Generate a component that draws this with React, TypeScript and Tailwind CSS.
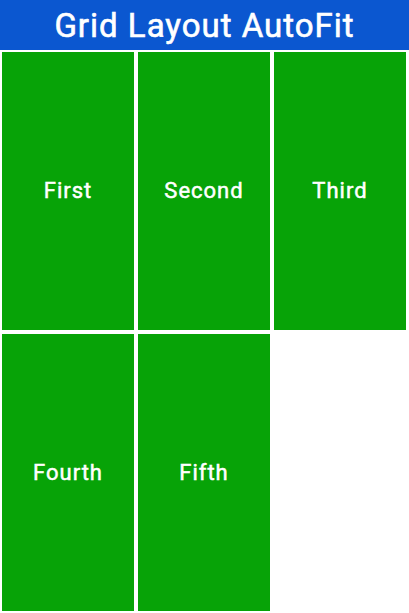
const items = ["First", "Second", "Third", "Fourth", "Fifth"];

export default function App() {
  return (
    <div
      className="flex h-[613px] w-full flex-col bg-white"
      style={{ fontFamily: "Roboto, 'Liberation Sans', sans-serif" }}
    >
      <header className="flex h-[50px] shrink-0 items-center justify-center bg-[#0b57d0]">
        <h1 className="text-[33px] font-normal leading-none tracking-[1px] text-white [-webkit-text-stroke:0.6px_white]">
          Grid Layout AutoFit
        </h1>
      </header>
      <div className="grid flex-1 grid-cols-[repeat(auto-fit,132px)] grid-rows-2 gap-[4px] p-[2px]">
        {items.map((label) => (
          <div
            key={label}
            className="flex items-center justify-center bg-[#07a307] text-[22px] font-normal tracking-[1px] text-white [-webkit-text-stroke:0.5px_white]"
          >
            {label}
          </div>
        ))}
      </div>
    </div>
  );
}
